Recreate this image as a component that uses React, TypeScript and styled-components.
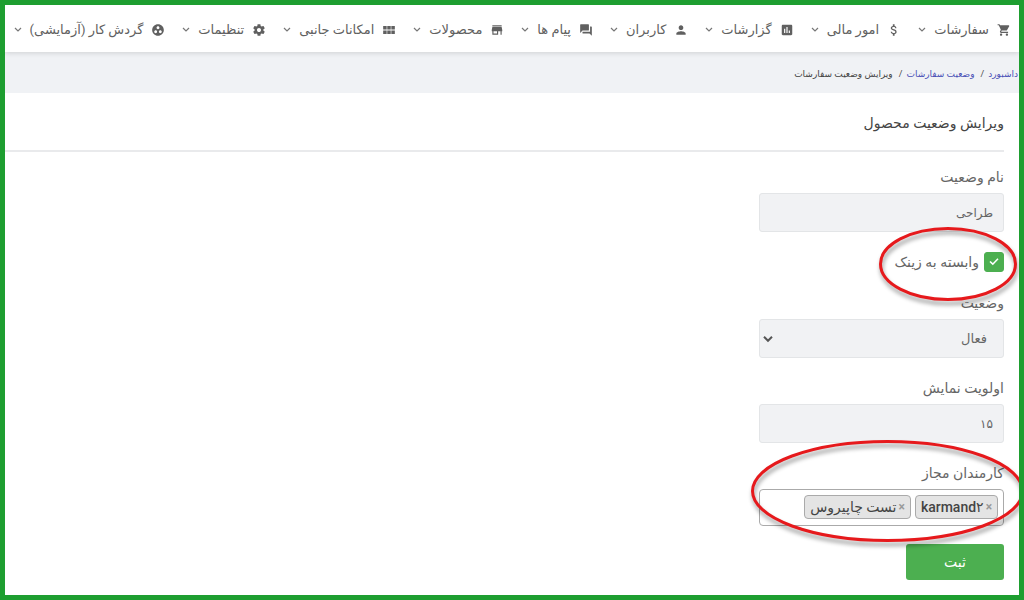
import React, { useState } from "react";
import styled, { createGlobalStyle } from "styled-components";

const GlobalStyle = createGlobalStyle`
  *, *::before, *::after { box-sizing: border-box; }
  body {
    margin: 0;
    background: #fff;
    color: #666;
    font-family: Roboto, "DejaVu Sans", sans-serif;
    font-size: 14px;
  }
  button, input, select { font: inherit; color: inherit; }
`;

const Frame = styled.div`
  min-height: 100vh;
  border: 5px solid #1e9e30;
  background: #fff;
  overflow: hidden;
`;

const Nav = styled.nav`
  position: relative;
  display: flex;
  gap: 17px;
  height: 47px;
  padding: 0 8px;
  background: #fff;
  box-shadow: 0 1px 5px rgba(0, 0, 0, 0.14);
`;

const NavItem = styled.button`
  display: flex;
  flex: none;
  align-items: center;
  gap: 8px;
  padding: 2px 0 0;
  border: 0;
  background: none;
  color: #606060;
  white-space: nowrap;
  cursor: pointer;
`;

const NavIcon = styled.svg`
  width: 14px;
  height: 14px;
  fill: currentColor;
`;

const NavLabel = styled.span`
  font-size: 13px;
  line-height: 24px;
`;

const NavArrow = styled.svg`
  width: 8px;
  height: 14px;
  fill: none;
  stroke: #777;
`;

const Crumbs = styled.ol`
  display: flex;
  align-items: center;
  height: 41px;
  margin: 0;
  padding: 2px 1px 0;
  background: #f0f2f5;
  list-style: none;
  color: #444;
  font-size: 9px;
`;

const Crumb = styled.li`
  & + &::before {
    content: "/";
    padding: 0 4px 0 6px;
  }
`;

const CrumbLink = styled.a`
  color: #4a50b5;
  text-decoration: none;
`;

const Main = styled.main`
  padding: 18px 15px 14px 0;
`;

const Title = styled.h1`
  margin: 0 0 13px;
  padding-bottom: 15px;
  border-bottom: 2px solid #e9eaec;
  color: #444;
  font-size: 14px;
  font-weight: 400;
  line-height: 24px;
`;

const Form = styled.form`
  display: flex;
  flex-direction: column;
  align-items: flex-start;
  gap: 18px;
`;

const Field = styled.div`
  position: relative;
  display: flex;
  flex-direction: column;
  gap: 4px;
  width: 245px;
`;

const Label = styled.label`
  line-height: 24px;
`;

const Input = styled.input`
  width: 100%;
  height: 39px;
  padding: 0 10px;
  border: 1px solid #e3e5e7;
  border-radius: 3px;
  background: #f1f2f4;
  font-size: 12px;
`;

const SelectWrap = styled.div`
  position: relative;
`;

const Select = styled.select`
  display: block;
  width: 100%;
  height: 39px;
  padding: 0 16px;
  border: 1px solid #e3e5e7;
  border-radius: 3px;
  background: #f1f2f4;
  font-size: 13px;
  appearance: none;
`;

const SelectArrow = styled.svg`
  position: absolute;
  left: 4px;
  top: 16px;
  width: 10px;
  height: 8px;
  pointer-events: none;
`;

const CheckRow = styled.label`
  position: relative;
  display: flex;
  align-items: center;
  gap: 5px;
  height: 23px;
`;

const CheckBox = styled.input`
  width: 20px;
  height: 20px;
  margin: 0;
  border: 1px solid #4caf50;
  border-radius: 3px;
  appearance: none;
  background: #fff;
  &:checked {
    background: #4caf50;
  }
`;

const CheckMark = styled.svg`
  position: absolute;
  right: 5px;
  top: 7px;
  width: 10px;
  height: 9px;
  pointer-events: none;
`;

const TagBox = styled.div`
  display: flex;
  align-items: center;
  gap: 4px;
  height: 37px;
  padding: 0 5px 2px;
  border: 1px solid #aaa;
  border-radius: 4px;
  background: #fff;
`;

const Tag = styled.span`
  display: flex;
  align-items: center;
  gap: 2px;
  height: 24px;
  padding: 0 5px;
  border: 1px solid #aaa;
  border-radius: 4px;
  background: #e4e4e4;
  color: #444;
  font-weight: 500;
  white-space: nowrap;
`;

const TagRemove = styled.button`
  padding: 0;
  border: 0;
  background: none;
  color: #999;
  font-size: 12px;
  font-weight: 700;
  line-height: 20px;
  cursor: pointer;
`;

const Submit = styled.button`
  width: 98px;
  height: 36px;
  border: 0;
  border-radius: 3px;
  background: #4caf50;
  color: #fff;
  cursor: pointer;
`;

const Ring = styled.svg<{ $top: number; $right: number }>`
  position: absolute;
  z-index: 1;
  top: ${(p) => p.$top}px;
  right: ${(p) => p.$right}px;
  overflow: visible;
  pointer-events: none;
  filter: drop-shadow(1px 4px 2px rgba(0, 0, 0, 0.4));
`;

type RingProps = { width: number; height: number; top: number; right: number };

const Highlight = ({ width, height, top, right }: RingProps) => (
  <Ring $top={top} $right={right} width={width} height={height} aria-hidden="true">
    <ellipse
      cx={width / 2}
      cy={height / 2}
      rx={width / 2 - 1.5}
      ry={height / 2 - 1.5}
      fill="none"
      stroke="#e6191c"
      strokeWidth="3"
    />
  </Ring>
);

const menu = [
  {
    label: "سفارشات",
    icon: "M7 18c-1.1 0-1.99.9-1.99 2S5.9 22 7 22s2-.9 2-2-.9-2-2-2zM1 2v2h2l3.6 7.59-1.35 2.45c-.16.28-.25.61-.25.96 0 1.1.9 2 2 2h12v-2H7.42c-.14 0-.25-.11-.25-.25l.03-.12.9-1.63h7.45c.75 0 1.41-.41 1.75-1.03l3.58-6.49c.08-.14.12-.31.12-.48 0-.55-.45-1-1-1H5.21l-.94-2H1zm16 16c-1.1 0-1.99.9-1.99 2s.89 2 1.99 2 2-.9 2-2-.9-2-2-2z",
  },
  {
    label: "امور مالی",
    icon: "M11.8 10.9c-2.27-.59-3-1.2-3-2.15 0-1.09 1.01-1.85 2.7-1.85 1.78 0 2.44.85 2.5 2.1h2.21c-.07-1.72-1.12-3.3-3.21-3.81V2h-3v3.16c-1.94.42-3.5 1.68-3.5 3.61 0 2.31 1.91 3.46 4.7 4.13 2.5.6 3 1.48 3 2.41 0 .69-.49 1.79-2.7 1.79-2.06 0-2.87-.92-2.98-2.1h-2.2c.12 2.19 1.76 3.42 3.68 3.83V22h3v-3.15c1.95-.37 3.5-1.5 3.5-3.55 0-2.84-2.43-3.81-4.7-4.4z",
  },
  {
    label: "گزارشات",
    icon: "M19 3H5c-1.1 0-2 .9-2 2v14c0 1.1.9 2 2 2h14c1.1 0 2-.9 2-2V5c0-1.1-.9-2-2-2zM9 17H7v-7h2v7zm4 0h-2V7h2v10zm4 0h-2v-4h2v4z",
  },
  {
    label: "کاربران",
    icon: "M12 12c2.21 0 4-1.79 4-4s-1.79-4-4-4-4 1.79-4 4 1.79 4 4 4zm0 2c-2.67 0-8 1.34-8 4v2h16v-2c0-2.66-5.33-4-8-4z",
  },
  {
    label: "پیام ها",
    icon: "M21 6h-2v9H6v2c0 .55.45 1 1 1h11l4 4V7c0-.55-.45-1-1-1zm-4 6V3c0-.55-.45-1-1-1H3c-.55 0-1 .45-1 1v14l4-4h10c.55 0 1-.45 1-1z",
  },
  {
    label: "محصولات",
    icon: "M20 4H4v2h16V4zm1 10v-2l-1-5H4l-1 5v2h1v6h10v-6h4v6h2v-6h1zm-9 4H6v-4h6v4z",
  },
  {
    label: "امکانات جانبی",
    icon: "M2 11h6V5H2v6zm0 8h6v-6H2v6zm7 0h6v-6H9v6zm7 0h6v-6h-6v6zM9 11h6V5H9v6zm7-6v6h6V5h-6z",
  },
  {
    label: "تنظیمات",
    icon: "M19.43 12.98c.04-.32.07-.64.07-.98s-.03-.66-.07-.98l2.11-1.65c.19-.15.24-.42.12-.64l-2-3.46c-.12-.22-.39-.3-.61-.22l-2.49 1c-.52-.4-1.08-.73-1.69-.98l-.38-2.65C14.46 2.18 14.25 2 14 2h-4c-.25 0-.46.18-.49.42l-.38 2.65c-.61.25-1.17.59-1.69.98l-2.49-1c-.23-.09-.49 0-.61.22l-2 3.46c-.13.22-.07.49.12.64l2.11 1.65c-.04.32-.07.65-.07.98s.03.66.07.98l-2.11 1.65c-.19.15-.24.42-.12.64l2 3.46c.12.22.39.3.61.22l2.49-1c.52.4 1.08.73 1.69.98l.38 2.65c.03.24.24.42.49.42h4c.25 0 .46-.18.49-.42l.38-2.65c.61-.25 1.17-.59 1.69-.98l2.49 1c.23.09.49 0 .61-.22l2-3.46c.12-.22.07-.49-.12-.64l-2.11-1.65zM12 15.5c-1.93 0-3.5-1.57-3.5-3.5s1.57-3.5 3.5-3.5 3.5 1.57 3.5 3.5-1.57 3.5-3.5 3.5z",
  },
  {
    label: "گردش کار (آزمایشی)",
    icon: "M12 2C6.48 2 2 6.48 2 12s4.48 10 10 10 10-4.48 10-10S17.52 2 12 2zM8 17.5c-1.38 0-2.5-1.12-2.5-2.5s1.12-2.5 2.5-2.5 2.5 1.12 2.5 2.5-1.12 2.5-2.5 2.5zM9.5 8c0-1.38 1.12-2.5 2.5-2.5s2.5 1.12 2.5 2.5-1.12 2.5-2.5 2.5S9.5 9.38 9.5 8zm6.5 9.5c-1.38 0-2.5-1.12-2.5-2.5s1.12-2.5 2.5-2.5 2.5 1.12 2.5 2.5-1.12 2.5-2.5 2.5z",
  },
];

export default function App() {
  const [linked, setLinked] = useState(true);
  const [staff, setStaff] = useState(["karmand۲", "تست چاپیروس"]);

  return (
    <Frame dir="rtl" lang="fa">
      <GlobalStyle />
      <Nav>
        {menu.map(({ label, icon }) => (
          <NavItem key={label} type="button">
            <NavIcon viewBox="0 0 24 24" aria-hidden="true">
              <path d={icon} />
            </NavIcon>
            <NavLabel>{label}</NavLabel>
            <NavArrow viewBox="0 0 8 14" aria-hidden="true">
              <path d="M1 5 4 8 7 5" strokeWidth="1.2" />
            </NavArrow>
          </NavItem>
        ))}
      </Nav>
      <Crumbs>
        <Crumb>
          <CrumbLink href="#dashboard">داشبورد</CrumbLink>
        </Crumb>
        <Crumb>
          <CrumbLink href="#statuses">وضعیت سفارشات</CrumbLink>
        </Crumb>
        <Crumb>ویرایش وضعیت سفارشات</Crumb>
      </Crumbs>
      <Main>
        <Title>ویرایش وضعیت محصول</Title>
        <Form onSubmit={(e) => e.preventDefault()}>
          <Field>
            <Label htmlFor="name">نام وضعیت</Label>
            <Input id="name" defaultValue="طراحی" />
          </Field>
          <CheckRow>
            <CheckBox type="checkbox" checked={linked} onChange={(e) => setLinked(e.target.checked)} />
            {linked && (
              <CheckMark viewBox="0 0 10 9" aria-hidden="true">
                <path d="M1 4.5 3.8 7.2 9 1.8" fill="none" stroke="#fff" strokeWidth="1.6" />
              </CheckMark>
            )}
            وابسته به زینک
            <Highlight width={138} height={74} top={-23} right={-13} />
          </CheckRow>
          <Field>
            <Label htmlFor="status">وضعیت</Label>
            <SelectWrap>
              <Select id="status" defaultValue="active">
                <option value="active">فعال</option>
                <option value="inactive">غیرفعال</option>
              </Select>
              <SelectArrow viewBox="0 0 10 8" aria-hidden="true">
                <path d="M1 1.8 5 5.8 9 1.8" fill="none" stroke="#555" strokeWidth="2" />
              </SelectArrow>
            </SelectWrap>
          </Field>
          <Field>
            <Label htmlFor="priority">اولویت نمایش</Label>
            <Input id="priority" defaultValue="۱۵" />
          </Field>
          <Field role="group" aria-labelledby="staff-label">
            <Label as="span" id="staff-label">کارمندان مجاز</Label>
            <TagBox>
              {staff.map((name) => (
                <Tag key={name}>
                  <TagRemove
                    type="button"
                    aria-label={`حذف ${name}`}
                    onClick={() => setStaff(staff.filter((s) => s !== name))}
                  >
                    ×
                  </TagRemove>
                  <bdi>{name}</bdi>
                </Tag>
              ))}
            </TagBox>
            <Highlight width={273} height={102} top={-21} right={-20} />
          </Field>
          <Submit type="submit">ثبت</Submit>
        </Form>
      </Main>
    </Frame>
  );
}
